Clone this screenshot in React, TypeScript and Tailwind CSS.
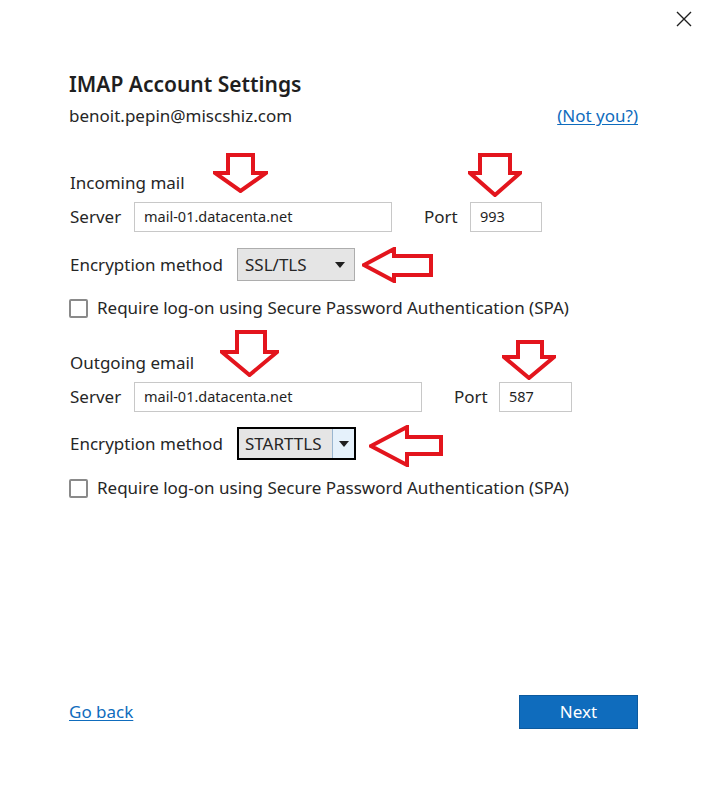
import type { ReactNode } from 'react';

const RED = '#e3151d';

function DownArrow({
  left,
  top,
  w,
  h,
  shaftL,
  shaftR,
  headY,
}: {
  left: number;
  top: number;
  w: number;
  h: number;
  shaftL: number;
  shaftR: number;
  headY: number;
}) {
  const pts = [
    [shaftL, 2],
    [shaftR, 2],
    [shaftR, headY],
    [w - 2, headY],
    [w / 2, h - 2],
    [2, headY],
    [shaftL, headY],
  ]
    .map((p) => p.join(','))
    .join(' ');
  return (
    <svg
      className="pointer-events-none absolute"
      style={{ left, top }}
      width={w}
      height={h}
      viewBox={`0 0 ${w} ${h}`}
    >
      <polygon points={pts} fill="white" stroke={RED} strokeWidth={4} strokeLinejoin="miter" />
    </svg>
  );
}

function LeftArrow({
  left,
  top,
  w,
  h,
  headX,
  shaftT,
  shaftB,
}: {
  left: number;
  top: number;
  w: number;
  h: number;
  headX: number;
  shaftT: number;
  shaftB: number;
}) {
  const pts = [
    [2, h / 2],
    [headX, 2],
    [headX, shaftT],
    [w - 2, shaftT],
    [w - 2, shaftB],
    [headX, shaftB],
    [headX, h - 2],
  ]
    .map((p) => p.join(','))
    .join(' ');
  return (
    <svg
      className="pointer-events-none absolute"
      style={{ left, top }}
      width={w}
      height={h}
      viewBox={`0 0 ${w} ${h}`}
    >
      <polygon points={pts} fill="white" stroke={RED} strokeWidth={4} strokeLinejoin="miter" />
    </svg>
  );
}

function Caret() {
  return (
    <svg width="10" height="6" viewBox="0 0 10 6">
      <polygon points="0,0 10,0 5,6" fill="#1f1f1f" />
    </svg>
  );
}

function TextBox({ value, className }: { value: string; className: string }) {
  return (
    <div
      className={`flex h-[30px] items-center border border-[#c8c8c8] bg-white px-[9px] text-[14.5px] text-[#1f1f1f] ${className}`}
    >
      {value}
    </div>
  );
}

function Check({ children }: { children: ReactNode }) {
  return (
    <label className="flex h-6 items-center gap-[9px]">
      <span className="h-[19px] w-[19px] rounded-[2px] border-2 border-[#8a8a8a] bg-white" />
      <span>{children}</span>
    </label>
  );
}

export default function App() {
  return (
    <div
      className="relative flex h-[807px] w-[708px] flex-col bg-white pl-[69px] pr-[70px] text-[17px] text-[#262626]"
      style={{ fontFamily: '"Noto Sans", "Open Sans", sans-serif' }}
    >
      <button type="button" className="absolute right-[16px] top-[11px] text-[#1f1f1f]">
        <svg width="16" height="16" viewBox="0 0 16 16">
          <path d="M1 1 L15 15 M15 1 L1 15" stroke="currentColor" strokeWidth="1.4" />
        </svg>
      </button>

      <h1 className="mt-[70px] h-7 text-[21px] font-semibold leading-7 text-[#1f1f1f]">
        IMAP Account Settings
      </h1>

      <div className="mt-[6px] flex h-6 items-center justify-between">
        <span>benoit.pepin@miscshiz.com</span>
        <a href="#" className="text-[#0f6cbd] underline underline-offset-2">
          (Not you?)
        </a>
      </div>

      <div className="mt-[43px] flex h-6 items-center pl-px">Incoming mail</div>
      <div className="mt-[7px] flex items-center pl-px">
        <span className="w-[64px]">Server</span>
        <TextBox value="mail-01.datacenta.net" className="w-[258px]" />
        <span className="ml-[32px] w-[46px]">Port</span>
        <TextBox value="993" className="w-[72px]" />
      </div>

      <div className="mt-[16px] flex items-center pl-px">
        <span className="w-[167px]">Encryption method</span>
        <div className="flex h-[33px] w-[118px] items-center justify-between border border-[#adadad] bg-[#e5e5e5] pl-[7px] pr-[9px]">
          <span>SSL/TLS</span>
          <Caret />
        </div>
      </div>

      <div className="mt-[15px]">
        <Check>Require log-on using Secure Password Authentication (SPA)</Check>
      </div>

      <div className="mt-[31px] flex h-6 items-center pl-px">Outgoing email</div>
      <div className="mt-[7px] flex items-center pl-px">
        <span className="w-[64px]">Server</span>
        <TextBox value="mail-01.datacenta.net" className="w-[288px]" />
        <span className="ml-[32px] w-[45px]">Port</span>
        <TextBox value="587" className="w-[73px]" />
      </div>

      <div className="mt-[15px] flex items-center pl-px">
        <span className="w-[167px]">Encryption method</span>
        <div className="flex h-[33px] w-[119px] items-stretch border-2 border-black bg-[#e5e5e5]">
          <span className="flex flex-1 items-center pl-[6px]">STARTTLS</span>
          <span className="flex w-[22px] items-center justify-center border-l border-[#9ab6d0] bg-[#e5f1fb]">
            <Caret />
          </span>
        </div>
      </div>

      <div className="mt-[16px]">
        <Check>Require log-on using Secure Password Authentication (SPA)</Check>
      </div>

      <div className="mb-[78px] mt-auto flex items-center justify-between">
        <a href="#" className="text-[17px] text-[#0f6cbd] underline underline-offset-2">
          Go back
        </a>
        <button
          type="button"
          className="h-[34px] w-[119px] border border-[#0c5a9e] bg-[#0f6cbd] text-[17px] text-white"
        >
          Next
        </button>
      </div>

      <DownArrow left={213} top={153} w={55} h={40} shaftL={15} shaftR={40} headY={20} />
      <DownArrow left={468} top={153} w={54} h={44} shaftL={12} shaftR={42} headY={20} />
      <LeftArrow left={362} top={247} w={71} h={36} headX={32} shaftT={9} shaftB={28} />
      <DownArrow left={220} top={330} w={59} h={47} shaftL={17} shaftR={45} headY={22} />
      <DownArrow left={502} top={340} w={54} h={40} shaftL={16} shaftR={40} headY={17} />
      <LeftArrow left={369} top={425} w={74} h={42} headX={38} shaftT={12} shaftB={29} />
    </div>
  );
}
